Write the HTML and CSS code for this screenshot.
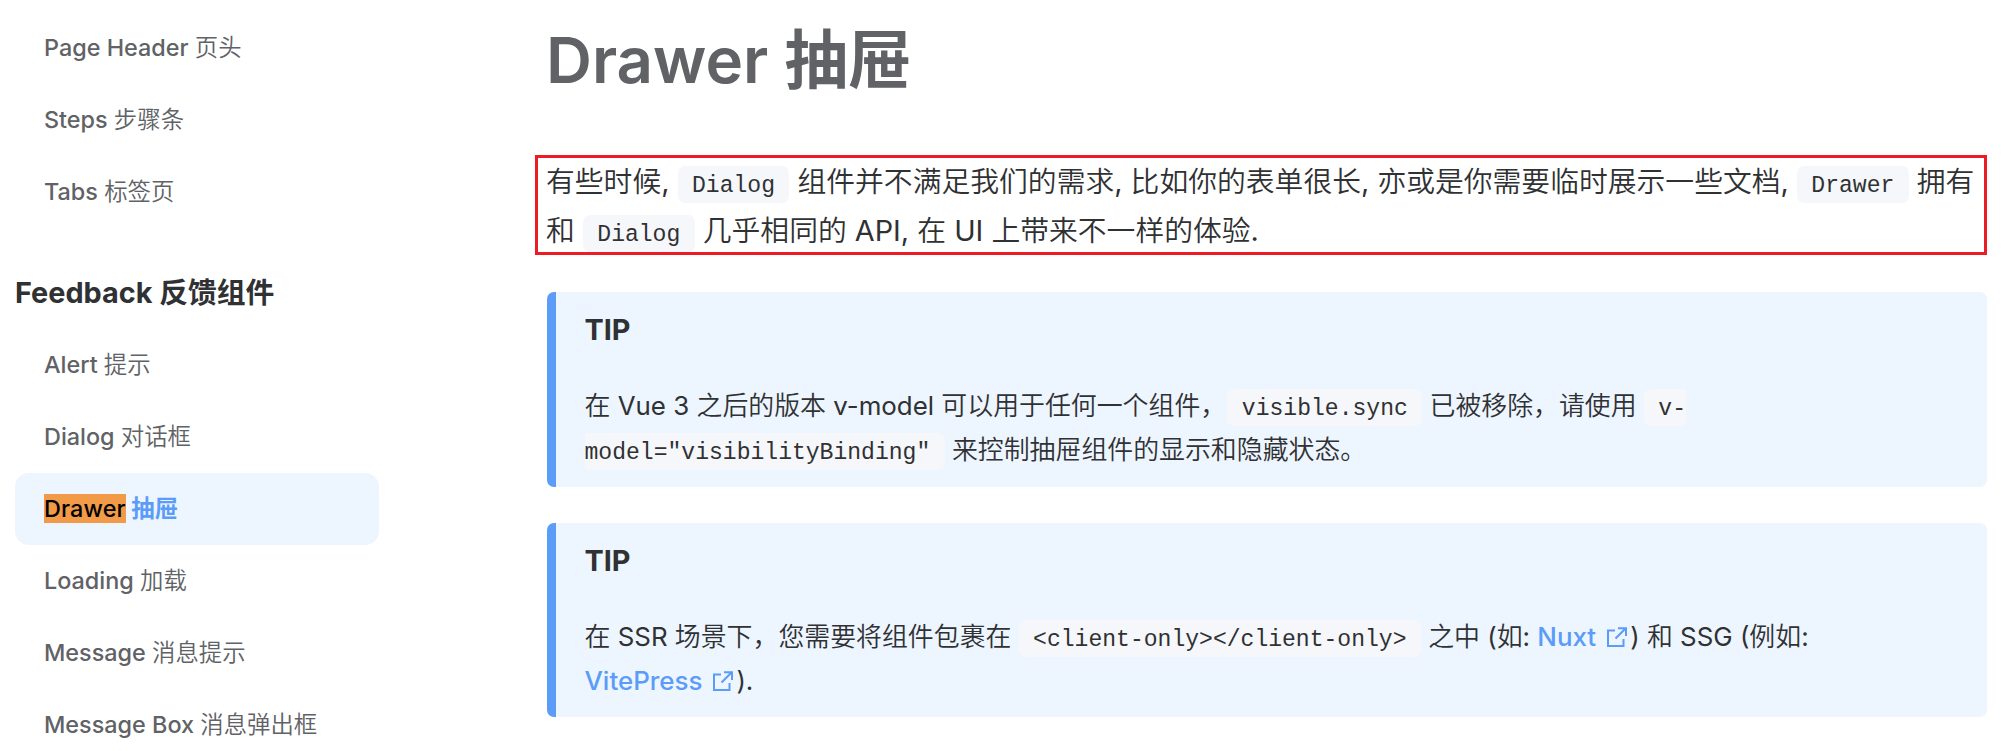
FILE: index.html
```html
<!DOCTYPE html>
<html lang="zh-CN">
<head>
<meta charset="utf-8">
<title>Drawer 抽屉</title>
<link rel="stylesheet" href="styles.css">
</head>
<body>
<div class="page">
  <nav class="sidebar">
    <a class="item">Page Header 页头</a>
    <a class="item">Steps 步骤条</a>
    <a class="item">Tabs 标签页</a>
    <h2 class="group">Feedback 反馈组件</h2>
    <a class="item">Alert 提示</a>
    <a class="item">Dialog 对话框</a>
    <a class="item active"><mark class="hit">Drawer</mark> 抽屉</a>
    <a class="item">Loading 加载</a>
    <a class="item">Message 消息提示</a>
    <a class="item">Message Box 消息弹出框</a>
  </nav>
  <main class="content">
    <h1 class="title">Drawer 抽屉</h1>
    <div class="framed">
      <p class="intro">有些时候, <code>Dialog</code> 组件并不满足我们的需求, 比如你的表单很长, 亦或是你需要临时展示一些文档, <code>Drawer</code> 拥有<br>和 <code>Dialog</code> 几乎相同的 API, 在 UI 上带来不一样的体验.</p>
    </div>
    <section class="tip">
      <p class="tip-title">TIP</p>
      <p class="tip-text">在 Vue 3 之后的版本 v-model 可以用于任何一个组件， <code class="after-comma">visible.sync</code> 已被移除，请使用 <code>v-<br>model="visibilityBinding"</code> 来控制抽屉组件的显示和隐藏状态。</p>
    </section>
    <section class="tip second">
      <p class="tip-title">TIP</p>
      <p class="tip-text">在 SSR 场景下，您需要将组件包裹在 <code>&lt;client-only&gt;&lt;/client-only&gt;</code> 之中 (如: <a class="link">Nuxt<svg class="ext" viewBox="0 0 20 20"><path d="M8 3.5H1V19h15.5v-7M11 1.2h8V9M18.5 1.5L8.5 11.5"/></svg></a>) 和 SSG (例如:<br><a class="link">VitePress<svg class="ext" viewBox="0 0 20 20"><path d="M8 3.5H1V19h15.5v-7M11 1.2h8V9M18.5 1.5L8.5 11.5"/></svg></a>).</p>
    </section>
  </main>
</div>
</body>
</html>
```
FILE: styles.css
```css
* { box-sizing: border-box; }
body {
  margin: 0;
  background: #fff;
  color: #303133;
  font-family: Inter, "Noto Sans CJK SC", sans-serif;
  overflow: hidden;
}
p, h1, h2 { margin: 0; }
.page { display: flex; height: 751px; overflow: hidden; }
.sidebar {
  width: 379px;
  padding: 12px 0 0 15px;
  flex: none;
}
.item {
  display: block;
  height: 72px;
  padding-left: 29px;
  border-radius: 14px;
  font-family: Inter, "Noto Sans CJK SC DemiLight", "Noto Sans CJK SC", sans-serif;
  font-size: 23.4px;
  line-height: 72px;
  font-weight: 450;
  letter-spacing: 0;
  color: #606266;
  white-space: nowrap;
}
.active {
  background: #edf5ff;
  color: #5a9cf8;
  font-family: Inter, "Noto Sans CJK SC", sans-serif;
  font-weight: 700;
}
.hit { background: #f19a48; color: #000; font-weight: 500; letter-spacing: 0.15px; }
.group {
  margin: 40px 0 12px;
  height: 49px;
  font-size: 28.8px;
  line-height: 49px;
  font-weight: 700;
  white-space: nowrap;
}
.content { width: 1452px; margin-left: 156px; padding-top: 20px; flex: none; }
.title {
  padding-left: 11px;
  font-size: 63.6px;
  line-height: 80px;
  font-weight: 600;
  color: #606266;
}
.framed {
  height: 100px;
  margin-top: 55px;
  padding-left: 8px;
  border: 3px solid #ed1c24;
}
.intro {
  margin-top: -1px;
  font-family: Inter, "Noto Sans CJK SC DemiLight", "Noto Sans CJK SC", sans-serif;
  font-size: 28.8px;
  line-height: 49px;
  font-weight: 370;
  white-space: nowrap;
}
code {
  padding: 7px 14.4px 4px;
  border-radius: 7px;
  background: #f5f7fb;
  font-family: "Liberation Mono", monospace;
  font-size: 23.05px;
  line-height: 1;
  font-weight: 400;
}
.after-comma { margin-left: -6px; }
.tip {
  height: 195px;
  margin: 37px 0 0 12px;
  padding: 13px 0 0 28.5px;
  border-left: 9px solid #5a9cf8;
  border-radius: 7px;
  background: #edf5ff;
}
.second { height: 194px; margin-top: 36px; }
.tip-title { font-size: 28.8px; line-height: 49px; font-weight: 700; }
.tip-text {
  margin-top: 30px;
  font-family: Inter, "Noto Sans CJK SC DemiLight", "Noto Sans CJK SC", sans-serif;
  font-size: 25.9px;
  line-height: 44px;
  font-weight: 370;
  white-space: nowrap;
}
.link { color: #5a9cf8; font-weight: 500; }
.ext {
  width: 20px;
  height: 20px;
  margin: 0 3px 0 11px;
  vertical-align: -1px;
  fill: none;
  stroke: #5a9cf8;
  stroke-width: 2;
}
```
